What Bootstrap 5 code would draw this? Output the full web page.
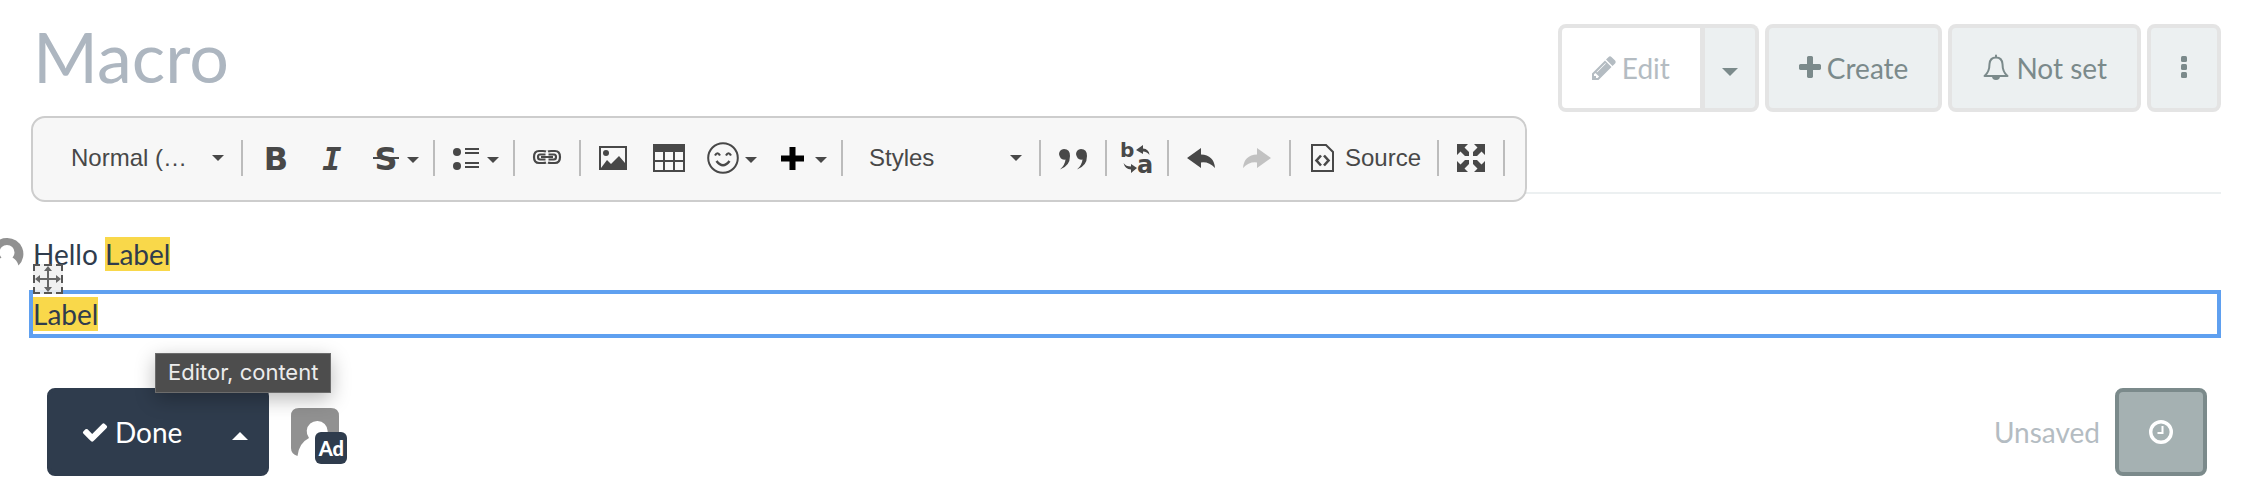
<!DOCTYPE html>
<html lang="en">
<head>
<meta charset="utf-8">
<meta name="viewport" content="width=device-width, initial-scale=1">
<title>Macro</title>
<link rel="stylesheet" href="https://cdn.jsdelivr.net/npm/bootstrap@5.3.0/dist/css/bootstrap.min.css">
<style>
  body { font-family: Lato, "Liberation Sans", sans-serif; font-size: 28px; line-height: 40px; color: #2f3c4d; background: #fff; overflow-x: hidden; }
  svg { flex: none; fill: currentColor; display: block; overflow: visible; }
  .page { padding: 24px 41px 0 33px; }
  .page-head { min-height: 170px; border-bottom: 2px solid #ecf0f1; }
  .page-title { font-size: 70px; line-height: 64px; font-weight: 400; color: #adb6c0; }
  .actions { gap: 6px; }
  .act { --bs-btn-font-size: 28px; --bs-btn-line-height: 40px; --bs-btn-padding-x: 30px; --bs-btn-padding-y: 20px; --bs-btn-border-width: 4px; --bs-btn-border-radius: 8px;
    --bs-btn-color: #7b8a8b; --bs-btn-bg: #ecf0f1; --bs-btn-border-color: #e4e4e4; --bs-btn-hover-bg: #e1e6e7; --bs-btn-hover-color: #6b7a7b; --bs-btn-hover-border-color: #dcdcdc;
    display: flex; align-items: center; gap: 6px; min-height: 88px; white-space: nowrap; }
  .act-edit { --bs-btn-bg: #fff; --bs-btn-color: #b4bcc2; border-right-width: 6px; }
  .act-caret { --bs-btn-padding-x: 17px; border-left-width: 0; }
  .act-done { --bs-btn-color: #fff; --bs-btn-bg: #2f3c4d; --bs-btn-border-color: #2f3c4d; --bs-btn-hover-color: #fff; --bs-btn-hover-bg: #263140; --bs-btn-hover-border-color: #263140; }
  .act-save { --bs-btn-color: #fff; --bs-btn-bg: #a5b1b2; --bs-btn-border-color: #7b8a8b; }

  /* floating editor toolbar */
  .editor-bar { position: absolute; left: -2px; top: 92px; height: 86px; padding: 0 16px 2px; background: #f7f7f7; border: 2px solid #cdcdcd; border-radius: 14px; color: #484848; font-family: "Liberation Sans", Arial, sans-serif; font-size: 24px; line-height: 32px; }
  .tool { border: 0; background: none; color: inherit; height: 56px; padding: 0 12px; display: flex; align-items: center; gap: 4px; line-height: 32px; }
  .tool-menu { padding-right: 10px; }
  .tool-lang { padding: 0 10px; }
  .tool-source { gap: 6px; }
  .split { width: 2px; height: 36px; margin: 0 4px; background: #bcbcbc; }
  .combo { display: grid; width: 188px; align-items: center; }
  .combo > * { grid-area: 1 / 1; }
  .combo select { appearance: none; border: 0; background: none; color: inherit; width: 100%; height: 56px; padding: 0 40px 0 22px; }
  .combo svg { justify-self: end; margin-right: 13px; pointer-events: none; }
  .glyph { font-family: "DejaVu Sans", sans-serif; font-weight: 700; }
  .glyph-slant { font-family: "DejaVu Sans Mono", monospace; font-weight: 700; font-style: italic; }

  .hl { background: #f9d84a; }
  .editor-text { padding-top: 40px; }
  .widget-box { margin: 16px 0 0 -4px; border: 4px solid #5fa0f0; }
  .grip { position: absolute; left: 0; top: -30px; border: 0; padding: 0; background: none; }
  .presence { position: absolute; left: -42px; top: 44px; }
  .foot { padding: 50px 14px 0; }
  .face { margin-left: 22px; color: #919191; }
  .face-tag { position: absolute; left: 24px; top: 24px; width: 32px; height: 32px; border-radius: 6px; background: #2f3c4d; color: #fff; font-size: 20px; line-height: 32px; font-weight: 900; text-align: center; }
  .tip { position: absolute; left: 122px; top: 15px; padding: 0 12px; height: 40px; border: 1px solid #6c6c6c; background: #4d4d4d; color: #ececec; font: 400 22px/36px Inter, sans-serif; box-shadow: 0 6px 20px rgba(0,0,0,.28); white-space: nowrap; }
  .state { color: #b4bcc2; margin-right: 15px; }
</style>
</head>
<body>
<svg width="0" height="0" class="position-absolute" aria-hidden="true">
  <symbol id="down" viewBox="0 0 12 6"><path d="M0 0h12L6 6z"/></symbol>
  <symbol id="person" viewBox="0 0 48 48"><path d="M8 0H40Q48 0 48 8V40Q48 44 46 47Q43 35 34 30.500A10.500 10.500 0 1 0 18 30Q8 35 6.500 48Q0 46 0 40V8Q0 0 8 0z"/></symbol>
</svg>
<main class="page">
  <header class="page-head position-relative d-flex justify-content-between align-items-start">
    <h1 class="page-title mb-0">Macro</h1>
    <div class="actions d-flex">
      <div class="btn-group">
        <button type="button" class="btn act act-edit"><svg width="24" height="28" viewBox="128 0 1536 1792"><path d="M491 1536l91-91-235-235-91 91v107h128v128h107zm523-928q0-22-22-22-10 0-17 7l-542 542q-7 7-7 17 0 22 22 22 10 0 17-7l542-542q7-7 7-17zm-54-192l416 416-832 832h-416v-416zm683 96q0 53-37 90l-166 166-416-416 166-165q36-38 90-38 53 0 91 38l235 234q37 39 37 91z"/></svg>Edit</button>
        <button type="button" class="btn act act-caret" aria-label="More edit options"><svg class="mt-2" width="16" height="8"><use href="#down"/></svg></button>
      </div>
      <button type="button" class="btn act"><svg width="22" height="28" viewBox="192 0 1408 1792"><path d="M1600 736v192q0 40-28 68t-68 28h-416v416q0 40-28 68t-68 28h-192q-40 0-68-28t-28-68v-416h-416q-40 0-68-28t-28-68v-192q0-40 28-68t68-28h416v-416q0-40 28-68t68-28h192q40 0 68 28t28 68v416h416q40 0 68 28t28 68z"/></svg>Create</button>
      <button type="button" class="btn act"><svg width="28" height="28" viewBox="0 0 28 28"><path d="M14 1.500V3M2.500 22H25.500Q20.500 18 20.500 10Q20 3.500 14 3.500T7.500 10Q7.500 18 2.500 22z" fill="none" stroke="currentColor" stroke-width="2" stroke-linejoin="round" stroke-linecap="round"/><path d="M10 22h8a4 4 0 0 1-8 0z"/></svg>Not set</button>
      <button type="button" class="btn act" aria-label="More"><svg width="6" height="28" viewBox="0 0 6 28"><rect y="2" width="6" height="6" rx="1.500"/><rect y="10" width="6" height="6" rx="1.500"/><rect y="18" width="6" height="6" rx="1.500"/></svg></button>
    </div>

    <div class="editor-bar d-flex align-items-center" role="toolbar" aria-label="Editor toolbar">
      <div class="combo"><select aria-label="Paragraph format"><option>Normal (…</option></select><svg width="12" height="6"><use href="#down"/></svg></div>
      <span class="split"></span>
      <button type="button" class="tool" aria-label="Bold"><svg width="32" height="32"><text class="glyph" x="17" y="28" font-size="32" text-anchor="middle">B</text></svg></button>
      <button type="button" class="tool" aria-label="Italic"><svg width="32" height="32"><text class="glyph-slant" x="17" y="28" font-size="32" text-anchor="middle">I</text></svg></button>
      <button type="button" class="tool tool-menu" aria-label="Strikethrough"><svg width="32" height="32"><text class="glyph" x="15" y="28" font-size="32" text-anchor="middle">S</text><path d="M2 15h26v2H2z"/></svg><svg class="mt-1" width="12" height="6"><use href="#down"/></svg></button>
      <span class="split"></span>
      <button type="button" class="tool tool-menu" aria-label="List"><svg width="32" height="32"><circle cx="6" cy="10" r="4"/><circle cx="6" cy="24" r="4"/><path d="M14 6h14v2H14zM14 10h14v2H14zM14 20h14v2H14zM14 24h14v2H14z"/></svg><svg class="mt-1" width="12" height="6"><use href="#down"/></svg></button>
      <span class="split"></span>
      <button type="button" class="tool" aria-label="Link"><svg width="32" height="32"><path fill="none" stroke="currentColor" stroke-width="2.200" d="M15 9.500Q14 9 12 9H8Q3 9 3 15T8 21H12Q14 21 15 20.500M17 9.500Q18 9 20 9H24Q29 9 29 15T24 21H20Q18 21 17 20.500M14.500 12.500H9Q7 12.500 7 15T9 17.500H14.500M17.500 12.500H23Q25 12.500 25 15T23 17.500H17.500M10 15H22"/></svg></button>
      <span class="split"></span>
      <button type="button" class="tool" aria-label="Image"><svg width="32" height="32"><path fill-rule="evenodd" d="M2 4h28v24H2zM4 6v20h24V6z"/><circle cx="9" cy="11" r="3"/><path d="M4 26l6-8 4 4 8-8 6 7v6H4z"/></svg></button>
      <button type="button" class="tool" aria-label="Table"><svg width="32" height="32"><path fill-rule="evenodd" d="M0 2h32v28H0zM2 10v8h8v-8zM12 10v8h8v-8zM22 10v8h8v-8zM2 20v8h8v-8zM12 20v8h8v-8zM22 20v8h8v-8z"/></svg></button>
      <button type="button" class="tool tool-menu" aria-label="Emoji"><svg width="32" height="32" viewBox="2 0 32 32"><g fill="none" stroke="currentColor" stroke-width="2"><circle cx="16" cy="16" r="14.800"/><path d="M8 13.500Q10.500 9 13 13.500M19 13.500Q21.500 9 24 13.500" stroke-width="2.200"/><path d="M9.500 19Q16 27.500 22.500 19" stroke-width="2.500"/></g></svg><svg class="mt-1" width="12" height="6"><use href="#down"/></svg></button>
      <button type="button" class="tool tool-menu" aria-label="Insert"><svg width="32" height="32"><path fill="#000" d="M10.500 5h6v8.500H25v6h-8.500V28h-6v-8.500H2v-6h8.500z"/></svg><svg class="mt-1" width="12" height="6"><use href="#down"/></svg></button>
      <span class="split"></span>
      <div class="combo"><select aria-label="Styles"><option>Styles</option></select><svg width="12" height="6"><use href="#down"/></svg></div>
      <span class="split"></span>
      <button type="button" class="tool" aria-label="Block quote"><svg width="32" height="32"><path d="M2 12a5.500 5.500 0 0 1 5-5Q13 7 13 14Q13 24 3 27.500Q8 23 8.500 17.500Q3 18.500 2 12zM19 12a5.500 5.500 0 0 1 5-5Q30 7 30 14Q30 24 20 27.500Q25 23 25.500 17.500Q20 18.500 19 12z"/></svg></button>
      <span class="split"></span>
      <button type="button" class="tool tool-lang" aria-label="Language"><svg width="32" height="32"><g class="glyph"><text x="-1" y="15" font-size="20">b</text><text x="16" y="31" font-size="24">a</text></g><path d="M15 8l7-5v3.500Q28 7 28.500 13Q26 9.500 22 9.500V12zM16 26l-6 5v-3.500Q4 27 2.500 21Q5 24.500 10 24.500V22z"/></svg></button>
      <span class="split"></span>
      <button type="button" class="tool" aria-label="Undo"><svg width="32" height="32"><path d="M2 16L16 6V12.500Q29 13 30 26Q24 19.500 16 20.500V26z"/></svg></button>
      <button type="button" class="tool" aria-label="Redo" disabled><svg width="32" height="32" opacity=".3"><path d="M30 16L16 6V12.500Q3 13 2 26Q8 19.500 16 20.500V26z"/></svg></button>
      <span class="split"></span>
      <button type="button" class="tool tool-source"><svg width="32" height="32"><path fill="none" stroke="currentColor" stroke-width="2" d="M5 3H19L26 10V29H5z"/><path fill="none" stroke="currentColor" stroke-width="2.600" d="M14 13.500L9.500 18.500L14 23.500M17 13.500L21.500 18.500L17 23.500"/></svg>Source</button>
      <span class="split"></span>
      <button type="button" class="tool" aria-label="Maximize"><svg width="32" height="32"><path d="M2 2h11l-3.500 3.500L14 10v4h-4L5.500 9.500 2 13zM30 2v11l-3.500-3.500L22 14h-4v-4l4.500-4.500L19 2zM2 30V19l3.500 3.500L10 18h4v4l-4.500 4.500L13 30zM30 30H19l3.500-3.500L18 22v-4h4l4.500 4.500L30 19z"/></svg></button>
      <span class="split"></span>
    </div>
  </header>

  <section class="editor-text position-relative" aria-label="Editor, content">
    <svg class="presence" width="32" height="32" viewBox="0 0 32 32" color="#919191" aria-hidden="true"><path d="M16 0A16 16 0 0 1 27.500 27.500Q26 22 21.500 19.500A7.500 7.500 0 1 0 10.500 19.500Q6 22 4.500 27.500A16 16 0 0 1 16 0z"/></svg>
    <p class="mb-0">Hello <span class="hl">Label</span></p>
    <div class="widget-box position-relative">
      <button type="button" class="grip" aria-label="Drag and drop to move"><svg width="30" height="30"><rect width="30" height="30" fill="#efefef" opacity=".9"/><path d="M1 7V1H7M11 1H19M23 1H29V7M29 11V19M29 23V29H23M19 29H11M7 29H1V23M1 19V11" fill="none" stroke="#555" stroke-width="2"/><path d="M15 2l4 5h-3v7h7v-3l5 4-5 4v-3h-7v7h3l-4 5-4-5h3v-7H7v3l-5-4 5-4v3h7V7h-3z" fill="#666"/></svg></button>
      <p class="mb-0"><span class="hl">Label</span></p>
    </div>
  </section>

  <footer class="foot position-relative d-flex align-items-center">
    <div class="btn-group">
      <button type="button" class="btn act act-done"><svg width="28" height="28" viewBox="0 0 1792 1792"><path d="M1671 566q0 40-28 68l-724 724-136 136q-28 28-68 28t-68-28l-136-136-362-362q-28-28-28-68t28-68l136-136q28-28 68-28t68 28l294 295 656-657q28-28 68-28t68 28l136 136q28 28 28 68z"/></svg>Done</button>
      <button type="button" class="btn act act-done act-caret" aria-label="More save options"><svg class="mt-2" width="16" height="8" viewBox="0 0 16 8"><path d="M0 8h16L8 0z"/></svg></button>
    </div>
    <a href="#" class="face position-relative" aria-label="Admin"><svg width="48" height="48"><use href="#person"/></svg><span class="face-tag">Ad</span></a>
    <span class="state ms-auto">Unsaved</span>
    <button type="button" class="btn act act-save" aria-label="Autosave"><svg width="24" height="28" viewBox="0 0 24 28"><circle cx="12" cy="14" r="10.300" fill="none" stroke="currentColor" stroke-width="3.400"/><path d="M12.500 8h2v8H8.500v-2h4z"/></svg></button>
    <div class="tip" role="tooltip">Editor, content</div>
  </footer>
</main>
<script src="https://cdn.jsdelivr.net/npm/bootstrap@5.3.0/dist/js/bootstrap.bundle.min.js"></script>
</body>
</html>
